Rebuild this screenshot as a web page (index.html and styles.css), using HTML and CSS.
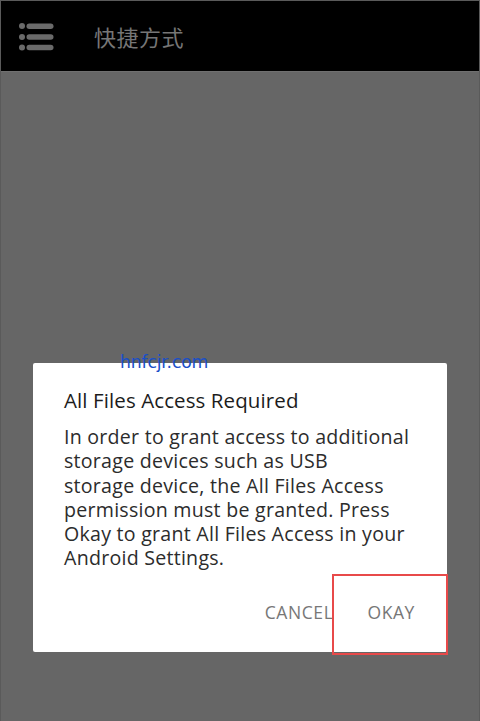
FILE: index.html
```html
<!DOCTYPE html>
<html>
<head>
<meta charset="utf-8">
<link rel="stylesheet" href="styles.css">
</head>
<body>
<div class="screen">
  <header class="topbar">
    <svg class="menu" width="40" height="32" viewBox="0 0 40 32">
      <circle cx="5" cy="5" r="3" fill="#6a6a6a"/>
      <circle cx="5" cy="16" r="3" fill="#6a6a6a"/>
      <circle cx="5" cy="26.5" r="3" fill="#6a6a6a"/>
      <rect x="9.5" y="2.5" width="27" height="5.5" rx="2.75" fill="#6a6a6a"/>
      <rect x="9.5" y="13.2" width="27" height="5.5" rx="2.75" fill="#6a6a6a"/>
      <rect x="9.5" y="23.8" width="27" height="5.5" rx="2.75" fill="#6a6a6a"/>
    </svg>
    <div class="title">快捷方式</div>
  </header>
  <main class="content">
    <div class="dialog">
      <div class="watermark">hnfcjr.com</div>
      <div class="dtitle">All Files Access Required</div>
      <div class="dbody">In order to grant access to additional<br>storage devices such as USB<br>storage device, the All Files Access<br>permission must be granted. Press<br>Okay to grant All Files Access in your<br>Android Settings.</div>
      <div class="actions">
        <span class="btn">CANCEL</span>
        <span class="btn okay">OKAY<span class="highlight"></span></span>
      </div>
    </div>
  </main>
</div>
</body>
</html>
```
FILE: styles.css
```css
html, body {
  margin: 0;
  padding: 0;
  background: #666666;
}
.screen {
  width: 478px;
  height: 720px;
  border: 1px solid #5a5a5a;
  border-bottom: none;
  display: flex;
  flex-direction: column;
  font-family: "Open Sans", "Noto Sans", sans-serif;
}
.topbar {
  height: 70px;
  background: #000;
  border-bottom: 1px solid #707070;
  display: flex;
  align-items: center;
  flex-shrink: 0;
}
.menu {
  margin-left: 16px;
  margin-top: 1px;
}
.title {
  margin-left: 37px;
  font-family: "Noto Sans CJK SC", sans-serif;
  font-size: 22px;
  color: #767676;
  letter-spacing: 0.5px;
  margin-top: -1px;
}
.content {
  flex: 1;
  background: #666666;
  padding-top: 291px;
  padding-left: 32px;
}
.dialog {
  position: relative;
  width: 414px;
  height: 289px;
  box-sizing: border-box;
  background: #fff;
  border-radius: 2px;
  padding: 24px 30px 30px 31px;
  display: flex;
  flex-direction: column;
}
.watermark {
  position: absolute;
  left: 87px;
  top: -11px;
  font-family: "DejaVu Sans", sans-serif;
  font-size: 17.3px;
  color: #1a4fc8;
  letter-spacing: -0.2px;
}
.dtitle {
  font-size: 20.5px;
  line-height: 27px;
  letter-spacing: 0.1px;
  color: #1c1c1c;
}
.dbody {
  margin-top: 11px;
  font-size: 19.6px;
  line-height: 24.3px;
  letter-spacing: 0.25px;
  color: #2c2c2c;
  white-space: nowrap;
}
.actions {
  display: flex;
  justify-content: flex-end;
  margin-top: auto;
  gap: 34px;
  padding-right: 2px;
}
.btn {
  font-size: 17.5px;
  color: #777;
  line-height: 20px;
  letter-spacing: 0.6px;
  position: relative;
}
.highlight {
  position: absolute;
  left: -35px;
  top: -28px;
  width: 112px;
  height: 77px;
  border: 2px solid #e84a4a;
}
```
